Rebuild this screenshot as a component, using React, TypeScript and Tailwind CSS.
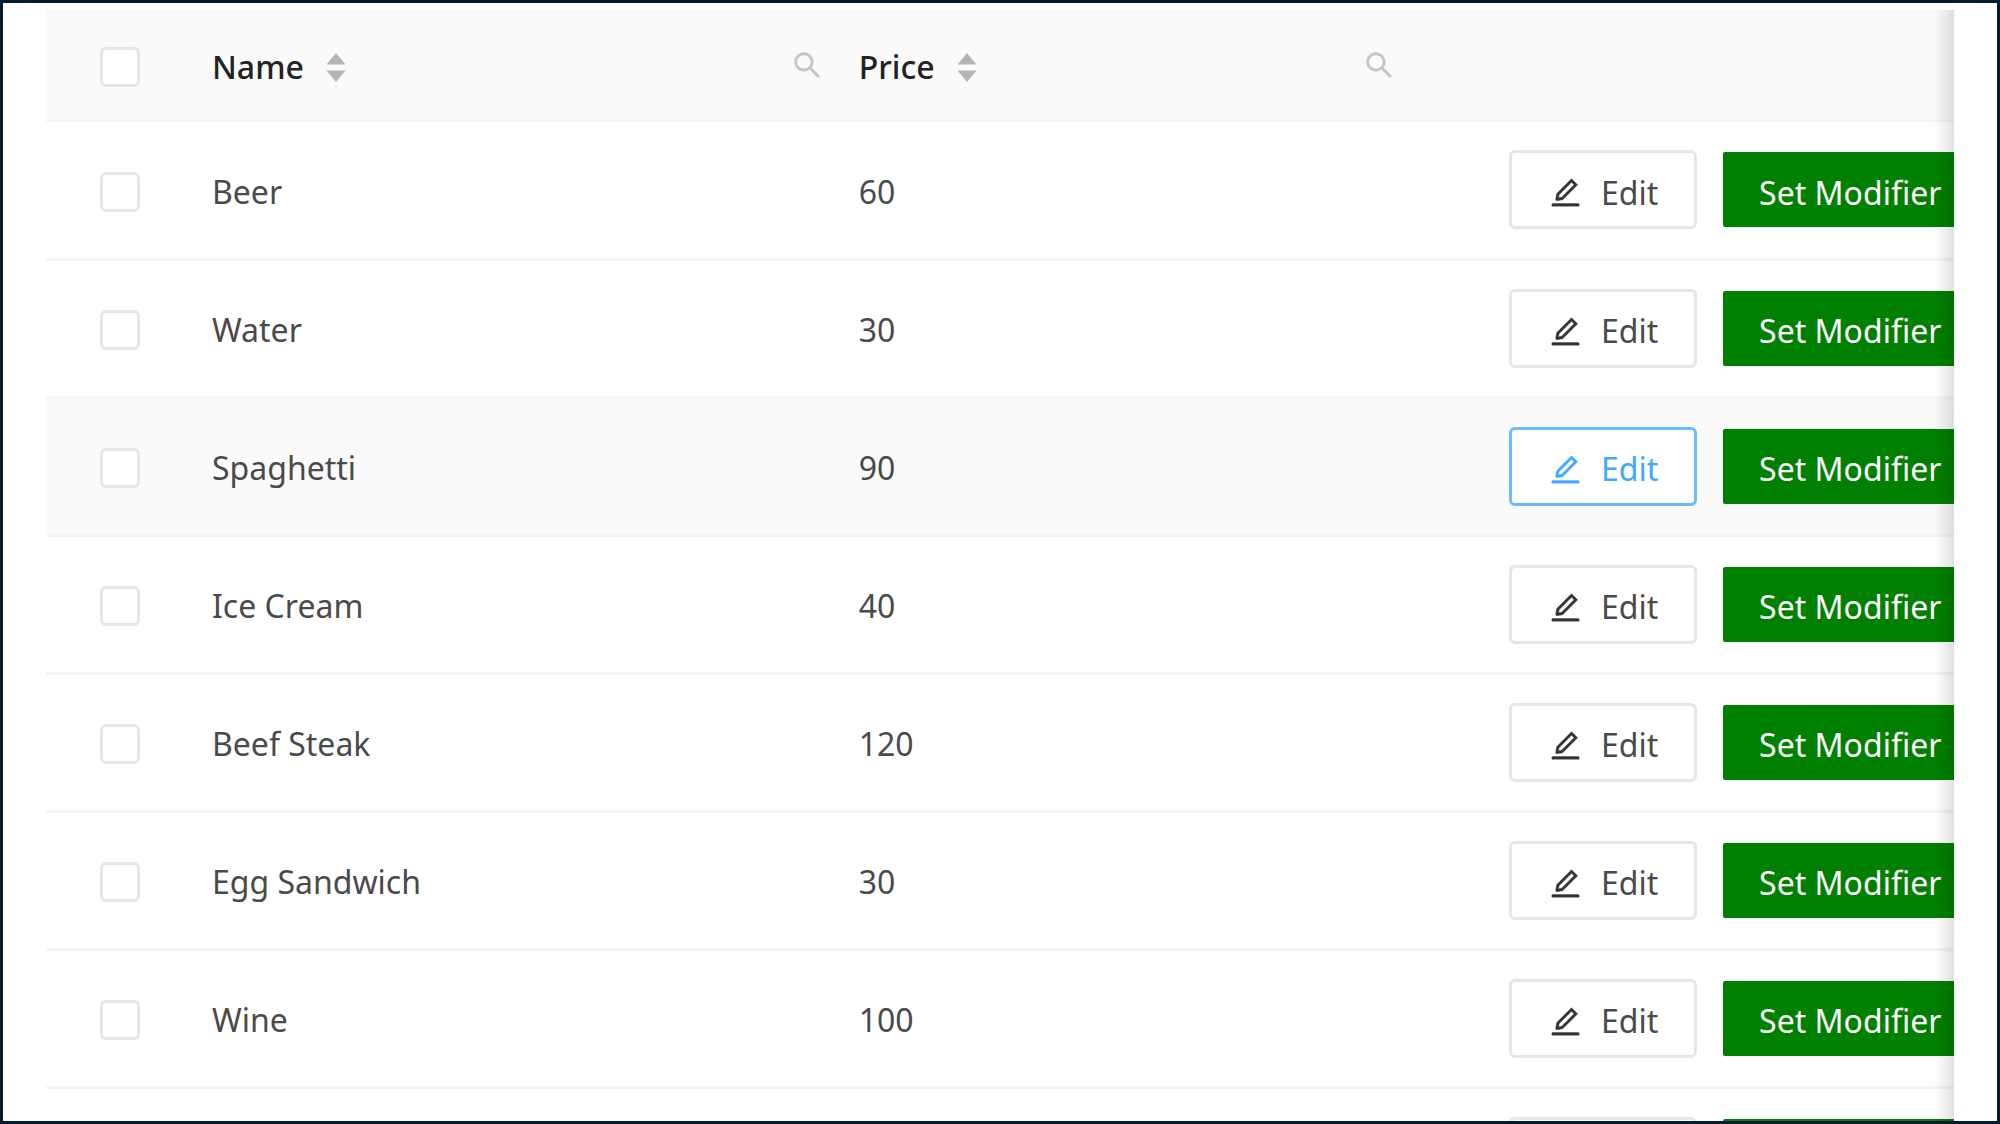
import React, { useState } from 'react';
import { AiOutlineEdit, AiOutlineSearch } from 'react-icons/ai';

interface MenuItem {
  id: number;
  name?: string;
  price?: number;
}

const ITEMS: MenuItem[] = [
  { id: 1, name: 'Beer', price: 60 },
  { id: 2, name: 'Water', price: 30 },
  { id: 3, name: 'Spaghetti', price: 90 },
  { id: 4, name: 'Ice Cream', price: 40 },
  { id: 5, name: 'Beef Steak', price: 120 },
  { id: 6, name: 'Egg Sandwich', price: 30 },
  { id: 7, name: 'Wine', price: 100 },
  { id: 8 },
];

function Checkbox({ label }: { label: string }) {
  return (
    <input
      type="checkbox"
      aria-label={label}
      className="block size-10 appearance-none rounded-md border-3 border-[#e6e6e6] bg-white checked:border-[#1890ff] checked:bg-[#1890ff]"
    />
  );
}

function SortableHeader({ title }: { title: string }) {
  return (
    <div className="flex items-center justify-between">
      <button type="button" className="flex items-center gap-[22px]">
        {title}
        <svg width="20" height="30" viewBox="0 0 20 30" fill="#b5b5b5" aria-hidden="true">
          <path d="M10 1 L19.5 12.5 H0.5 Z" />
          <path d="M10 30 L19.5 18.5 H0.5 Z" />
        </svg>
      </button>
      <button type="button" aria-label={`Search ${title}`} className="pb-1 text-[#c4c4c4]">
        <AiOutlineSearch size={32} strokeWidth={16} />
      </button>
    </div>
  );
}

export default function App() {
  const [activeId, setActiveId] = useState(3);

  return (
    <div className="h-screen overflow-hidden border-3 border-[#071a30] bg-white px-[43px] pt-[7px] font-['Noto_Sans','Open_Sans',sans-serif] text-[32px] text-[#4a4a4a]">
      <div className="relative overflow-hidden">
        <table className="w-full table-fixed border-collapse text-left">
          <thead>
            <tr className="h-[111px] border-b-2 border-[#f5f5f5] bg-[#fafafa] text-[#222]">
              <th className="w-[146px] pt-1 pl-[54px]">
                <Checkbox label="Select all" />
              </th>
              <th className="w-[34%] pt-1 pr-[18px] pl-5 font-medium">
                <SortableHeader title="Name" />
              </th>
              <th className="w-[30%] px-[18px] pt-1 font-medium">
                <SortableHeader title="Price" />
              </th>
              <th aria-label="Actions" />
            </tr>
          </thead>
          <tbody>
            {ITEMS.map((item) => {
              const active = item.id === activeId;
              return (
                <tr
                  key={item.id}
                  onMouseEnter={() => setActiveId(item.id)}
                  className={`h-[138px] border-b-3 border-[#f5f5f5] ${active ? 'bg-[#fafafa]' : ''}`}
                >
                  <td className="pt-1 pl-[54px]">
                    <Checkbox label={`Select ${item.name ?? 'row'}`} />
                  </td>
                  <td className="pt-1 pr-[18px] pl-5">{item.name}</td>
                  <td className="px-[18px] pt-1">{item.price}</td>
                  <td className="pl-24">
                    <div className="flex items-center gap-[26px] whitespace-nowrap">
                      <button
                        type="button"
                        className={`flex h-[79px] w-[188px] shrink-0 items-center justify-center gap-[18px] rounded-md border-3 bg-white pt-1.5 ${
                          active ? 'border-[#6dbaff] text-[#40a9ff]' : 'border-[#e6e6e6]'
                        }`}
                      >
                        <AiOutlineEdit
                          size={35}
                          strokeWidth={12}
                          className={active ? 'text-[#40a9ff]' : 'text-[#333]'}
                        />
                        Edit
                      </button>
                      <button
                        type="button"
                        className="h-[75px] shrink-0 rounded-xs bg-[#008000] px-9 pt-1.5 text-white"
                      >
                        Set Modifier
                      </button>
                    </div>
                  </td>
                </tr>
              );
            })}
          </tbody>
        </table>
        {/* fade at the edge of the scroll area */}
        <div className="pointer-events-none absolute inset-y-0 right-0 w-5 bg-linear-to-l from-black/12 to-transparent" />
      </div>
    </div>
  );
}
